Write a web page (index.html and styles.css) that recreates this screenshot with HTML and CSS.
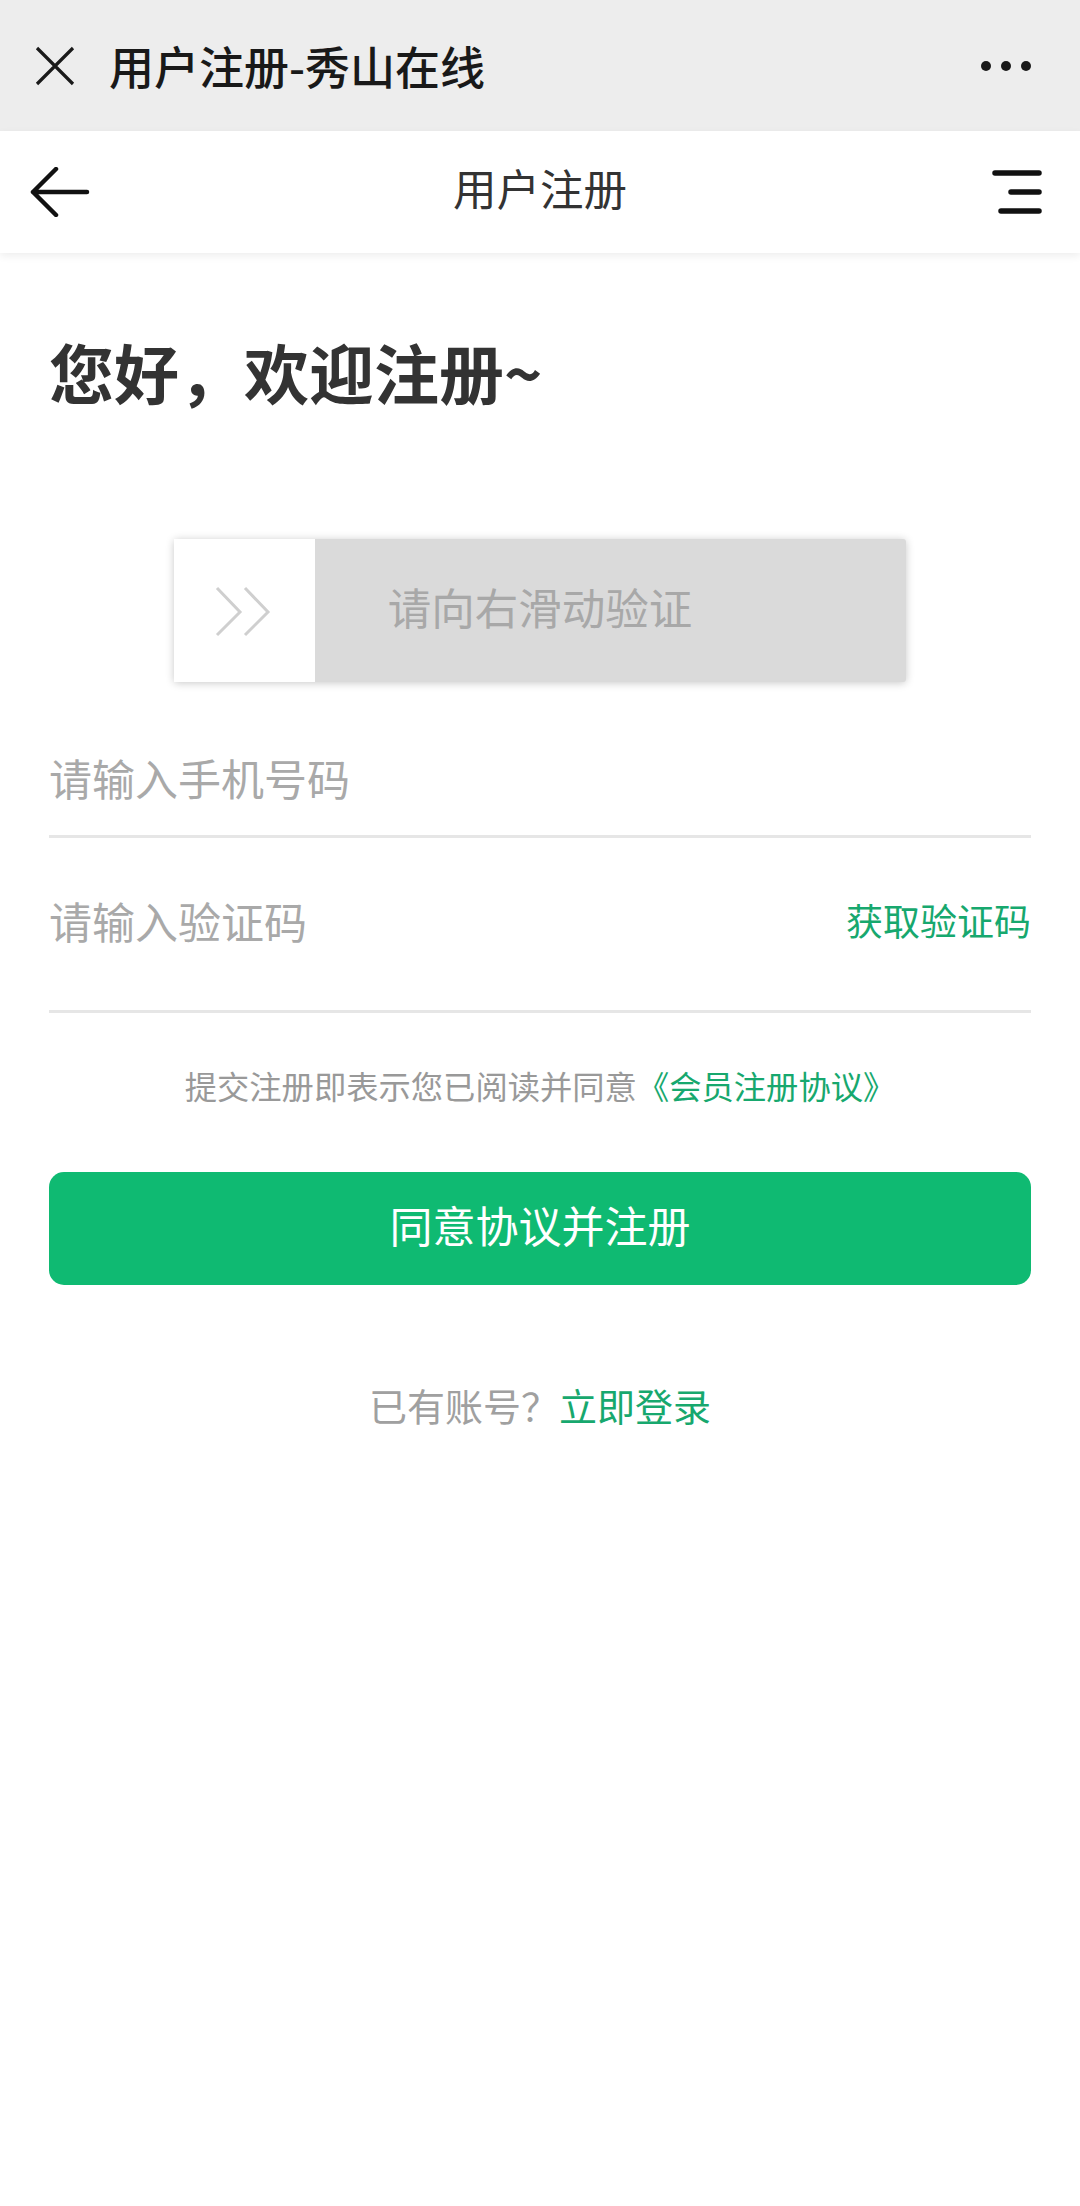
FILE: index.html
```html
<!DOCTYPE html>
<html lang="zh-CN">
<head>
<meta charset="utf-8">
<title>用户注册-秀山在线</title>
<link rel="stylesheet" href="styles.css">
</head>
<body>
<div class="topbar">
  <svg class="close-icon" width="41" height="40" viewBox="0 0 41 40">
    <path d="M3 2 L39 38 M39 2 L3 38" stroke="#1a1a1a" stroke-width="3.2" fill="none"/>
  </svg>
  <div class="topbar-title">用户注册-秀山在线</div>
  <svg class="more-icon" width="52" height="14" viewBox="0 0 52 14">
    <circle cx="6" cy="7" r="5" fill="#1a1a1a"/>
    <circle cx="26" cy="7" r="5" fill="#1a1a1a"/>
    <circle cx="46" cy="7" r="5" fill="#1a1a1a"/>
  </svg>
</div>
<div class="navbar">
  <div class="nav-left">
    <svg class="back-icon" width="60" height="50" viewBox="0 0 60 50">
      <path d="M26 2 L3 25 L26 48 M3 25 L57 25" stroke="#111" stroke-width="4.5" fill="none" stroke-linecap="round" stroke-linejoin="round"/>
    </svg>
  </div>
  <div class="nav-title">用户注册</div>
  <div class="nav-right">
    <svg class="menu-icon" width="52" height="48" viewBox="0 0 52 48">
      <path d="M3 5 H47 M19 24 H47 M9 43 H47" stroke="#111" stroke-width="5.5" fill="none" stroke-linecap="round"/>
    </svg>
  </div>
</div>
<main class="content">
  <h1 class="welcome">您好，欢迎注册~</h1>
  <div class="slider">
    <div class="slider-handle">
      <svg width="58" height="52" viewBox="0 0 58 52">
        <path d="M3 3 L26 27 L3 50 M31 3 L54 27 L31 50" stroke="#cfcfcf" stroke-width="3" fill="none"/>
      </svg>
    </div>
    <div class="slider-text">请向右滑动验证</div>
  </div>
  <div class="field field-phone">
    <span class="placeholder">请输入手机号码</span>
  </div>
  <div class="field field-code">
    <span class="placeholder">请输入验证码</span>
    <span class="get-code">获取验证码</span>
  </div>
  <p class="agreement">提交注册即表示您已阅读并同意<span class="link">《会员注册协议》</span></p>
  <button class="submit">同意协议并注册</button>
  <p class="login">已有账号？<span class="link">立即登录</span></p>
</main>
</body>
</html>
```
FILE: styles.css
```css
* { box-sizing: border-box; }
html, body {
  margin: 0;
  padding: 0;
  background: #fff;
  font-family: "Noto Sans CJK SC", "Noto Sans", sans-serif;
  width: 1080px;
}
.topbar {
  height: 131px;
  background: #ededed;
  display: flex;
  align-items: center;
}
.close-icon { margin-left: 34px; flex: none; }
.topbar-title {
  margin-left: 34px;
  font-size: 45px;
  font-weight: 500;
  color: #191919;
  line-height: 1;
}
.more-icon { margin-left: auto; margin-right: 48px; }

.navbar {
  height: 122px;
  background: #fff;
  display: grid;
  grid-template-columns: 1fr auto 1fr;
  align-items: center;
  box-shadow: 0 3px 8px rgba(0, 0, 0, 0.07);
  position: relative;
}
.nav-left { padding-left: 30px; display: flex; }
.nav-title { font-size: 43.5px; color: #333; line-height: 1; padding-bottom: 9px; }
.nav-right { display: flex; justify-content: flex-end; padding-right: 36px; }

.content { padding: 0 49px; }
.welcome {
  margin: 73px 0 0;
  font-size: 65px;
  line-height: 90px;
  font-weight: 700;
  color: #333;
}
.slider {
  margin: 123px auto 0;
  width: 732px;
  height: 143px;
  background: #dadada;
  display: flex;
  position: relative;
  box-shadow: 0 1px 8px rgba(0, 0, 0, 0.22);
  border-radius: 3px;
}
.slider-handle {
  width: 141px;
  height: 143px;
  background: #fff;
  display: flex;
  align-items: center;
  justify-content: center;
  padding-right: 4px;
}
.slider-text {
  position: absolute;
  left: 0; right: 0; top: 0; bottom: 0;
  display: flex;
  align-items: center;
  justify-content: center;
  padding-bottom: 9px;
  font-size: 43.5px;
  color: #a8a8a8;
}
.field {
  display: flex;
  align-items: center;
  justify-content: space-between;
  border-bottom: 3px solid #e6e6e6;
  font-size: 43px;
}
.field-phone { margin-top: 43px; height: 113px; padding-bottom: 6px; }
.field-code { height: 175px; padding-bottom: 8px; }
.placeholder { color: #a9a9a9; }
.get-code { color: #17a86e; font-size: 37px; }
.agreement {
  margin: 50px 0 0;
  text-align: center;
  font-size: 32.3px;
  line-height: 44px;
  color: #999;
}
.link { color: #17a86e; }
.submit {
  display: block;
  width: 100%;
  margin-top: 65px;
  height: 113px;
  border: none;
  border-radius: 15px;
  background: #0fba72;
  color: #fff;
  font-family: inherit;
  font-size: 43px;
  padding: 0 0 10px;
}
.login {
  margin: 95px 0 0;
  text-align: center;
  font-size: 38px;
  line-height: 50px;
  color: #a0a0a0;
}
```
